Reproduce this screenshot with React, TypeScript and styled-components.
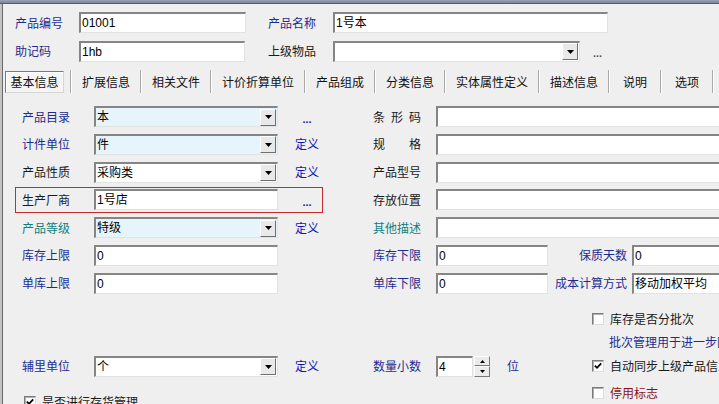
import React from "react";
import styled, { createGlobalStyle, css } from "styled-components";

const GlobalStyle = createGlobalStyle`
  html, body {
    margin: 0;
    padding: 0;
    background: #efefef;
    overflow: hidden;
  }
  body {
    font-family: "Noto Sans CJK SC", "Liberation Sans", sans-serif;
    font-size: 12px;
  }
`;

type Tone = "blue" | "black" | "teal" | "red" | "link" | "gray";

const toneColor: Record<Tone, string> = {
  blue: "#1c2d92",
  black: "#1a1a1a",
  teal: "#0f7f80",
  red: "#8a1414",
  link: "#1414b4",
  gray: "#555555"
};

const TopBar = styled.div`
  height: 4px;
  box-sizing: border-box;
  background: linear-gradient(#9aa2b8, #7b839c);
  border-bottom: 1px solid #5c5c66;
`;

const Frame = styled.div`
  width: 719px;
  height: 400px;
  box-sizing: border-box;
  border-left: 2px solid #c4c4c4;
  box-shadow: inset 1px 0 0 #6a6a6a;
  background: #efefef;
  overflow: hidden;
`;

const Header = styled.div`
  display: flex;
  flex-direction: column;
  gap: 7.5px;
  padding: 8px 0 0 13px;
`;

const HeaderRow = styled.div`
  display: flex;
  align-items: center;
  height: 21px;
`;

const Label = styled.span<{ $tone?: Tone; $w?: number; $ml?: number; $ls?: number; $right?: boolean }>`
  display: inline-block;
  flex: none;
  width: ${({ $w }) => ($w ? `${$w}px` : "auto")};
  margin-left: ${({ $ml }) => $ml ?? 0}px;
  color: ${({ $tone }) => toneColor[$tone ?? "blue"]};
  font-size: 12px;
  line-height: 16px;
  white-space: nowrap;
  letter-spacing: ${({ $ls }) => $ls ?? 0}px;
  text-align: ${({ $right }) => ($right ? "right" : "left")};
  box-sizing: border-box;
  padding-right: ${({ $right }) => ($right ? "5px" : "0")};
`;

const Field = styled.div<{ $w?: number; $tint?: boolean }>`
  box-sizing: border-box;
  flex: none;
  width: ${({ $w }) => ($w ? `${$w}px` : "400px")};
  height: 21px;
  display: flex;
  align-items: center;
  background: ${({ $tint }) => ($tint ? "#e6f4fc" : "#ffffff")};
  border-style: solid;
  border-width: 2px 1px 1px 2px;
  border-color: #858585 #e2e2e2 #e2e2e2 #858585;
  font-family: "Liberation Sans", "Noto Sans CJK SC", sans-serif;
  font-size: 12px;
  color: #000;
  white-space: nowrap;
  overflow: hidden;
`;

const FieldText = styled.span`
  flex: 1;
  padding-left: 1px;
  line-height: 16px;
`;

const DropButton = styled.span`
  flex: none;
  width: 16px;
  height: 17px;
  margin-right: 1px;
  box-sizing: border-box;
  display: flex;
  align-items: center;
  justify-content: center;
  background: #e9e9e9;
  border: 1px solid;
  border-color: #ffffff #6e6e6e #6e6e6e #ffffff;
`;

const Ellipsis = styled.span<{ $tone?: Tone; $ml?: number }>`
  margin-left: ${({ $ml }) => $ml ?? 0}px;
  color: ${({ $tone }) => toneColor[$tone ?? "link"]};
  font-family: "Liberation Sans", sans-serif;
  font-size: 11px;
  font-weight: bold;
  line-height: 16px;
  padding-top: 4px;
`;

const TabStrip = styled.div`
  display: flex;
  height: 24px;
  margin-top: 8.5px;
`;

const ActiveTab = styled.div`
  box-sizing: border-box;
  width: 59px;
  height: 22px;
  margin: 1px 6px 0 3px;
  display: flex;
  align-items: center;
  justify-content: center;
  background: #f5f5f5;
  border: 1px solid;
  border-color: #7a7a7a #d6d6d6 #d6d6d6 #7a7a7a;
  box-shadow: inset 1px 1px 0 #ffffff;
  color: #111;
  line-height: 16px;
`;

const TabSep = styled.span`
  flex: none;
  width: 1px;
  height: 23px;
  background: #a9a9a9;
  border-right: 1px solid #ffffff;
`;

const Tab = styled.div`
  flex: none;
  min-width: 50px;
  box-sizing: border-box;
  padding: 0 10px;
  display: flex;
  align-items: center;
  justify-content: center;
  color: #111;
  line-height: 16px;
  white-space: nowrap;
  height: 23px;
`;

const Columns = styled.div`
  display: flex;
  gap: 50px;
  margin-top: 12px;
  padding-left: 13px;
`;

const Column = styled.div<{ $w?: number }>`
  display: grid;
  grid-auto-rows: 21px;
  row-gap: 6.8px;
  width: ${({ $w }) => ($w ? `${$w}px` : "auto")};
  flex: ${({ $w }) => ($w ? "none" : "1")};
`;

const LeftRow = styled.div<{ $marked?: boolean }>`
  position: relative;
  box-sizing: border-box;
  width: 308px;
  height: 21px;
  padding-left: 7px;
  display: flex;
  align-items: center;
  ${({ $marked }) =>
    $marked &&
    css`
      &::before {
        content: "";
        position: absolute;
        inset: -2px 0 -3px 0;
        border: 1px solid #c62a2a;
        pointer-events: none;
      }
    `}
`;

const LinkCell = styled.span`
  flex: none;
  width: 24px;
  margin-left: 17px;
  display: flex;
  justify-content: center;
  color: ${toneColor.link};
  line-height: 16px;
`;

const RightRow = styled.div`
  display: flex;
  align-items: center;
  height: 21px;
`;

const Lower = styled.div`
  display: grid;
  grid-template-columns: 308px 50px 219px 1fr;
  grid-template-rows: 28px 17px 32px 21px;
  margin-top: 11.7px;
  padding-left: 13px;
`;

const Cell = styled.div<{ $col: number; $row: number; $top?: number }>`
  grid-column: ${({ $col }) => $col};
  grid-row: ${({ $row }) => $row};
  display: flex;
  align-items: ${({ $top }) => ($top !== undefined ? "flex-start" : "center")};
  padding-top: ${({ $top }) => $top ?? 0}px;
  min-width: 0;
  white-space: nowrap;
  overflow: visible;
`;

const CheckRow = styled.div<{ $tone?: Tone; $pl?: number }>`
  display: flex;
  align-items: center;
  gap: 6px;
  padding-left: ${({ $pl }) => $pl ?? 0}px;
  color: ${({ $tone }) => toneColor[$tone ?? "black"]};
  line-height: 16px;
  white-space: nowrap;
`;

const CheckBox = styled.span`
  flex: none;
  width: 12px;
  height: 12px;
  box-sizing: border-box;
  display: flex;
  align-items: center;
  justify-content: center;
  background: #ffffff;
  border: 1px solid;
  border-color: #7a7a7a #dcdcdc #dcdcdc #7a7a7a;
  box-shadow: inset 1px 1px 0 #b0b0b0;
`;

const Note = styled.span`
  padding-left: 17px;
  color: ${toneColor.blue};
  line-height: 16px;
  white-space: nowrap;
`;

const Spin = styled.span`
  display: flex;
  flex-direction: column;
  width: 16px;
  height: 21px;
  margin-left: 1px;
`;

const SpinButton = styled.span`
  flex: 1;
  box-sizing: border-box;
  display: flex;
  align-items: center;
  justify-content: center;
  background: #ebebeb;
  border: 1px solid;
  border-color: #ffffff #7a7a7a #7a7a7a #ffffff;
`;

const Arrow = ({ up }: { up?: boolean }) => (
  <svg width="7" height="4" viewBox="0 0 7 4">
    <path d={up ? "M3.5 0 L7 4 L0 4 Z" : "M0 0 L7 0 L3.5 4 Z"} fill="#000" />
  </svg>
);

const SmallArrow = ({ up }: { up?: boolean }) => (
  <svg width="5" height="3" viewBox="0 0 5 3">
    <path d={up ? "M2.5 0 L5 3 L0 3 Z" : "M0 0 L5 0 L2.5 3 Z"} fill="#000" />
  </svg>
);

const Tick = () => (
  <svg width="8" height="8" viewBox="0 0 8 8">
    <path d="M0.8 3.6 L3 5.8 L7.2 1.4" stroke="#000" strokeWidth="1.8" fill="none" />
  </svg>
);

function Combo(props: { w: number; value: string; tint?: boolean }) {
  return (
    <Field $w={props.w} $tint={props.tint}>
      <FieldText>{props.value}</FieldText>
      <DropButton>
        <Arrow />
      </DropButton>
    </Field>
  );
}

function Check(props: { label: string; checked?: boolean; tone?: Tone; pl?: number }) {
  return (
    <CheckRow $tone={props.tone} $pl={props.pl}>
      <CheckBox>{props.checked ? <Tick /> : null}</CheckBox>
      {props.label}
    </CheckRow>
  );
}

const tabs = ["扩展信息", "相关文件", "计价折算单位", "产品组成", "分类信息", "实体属性定义", "描述信息", "说明", "选项"];

interface leftItem {
  label: string;
  tone: Tone;
  value: string;
  combo: boolean;
  tint?: boolean;
  link?: string;
  marked?: boolean;
}

const leftItems: leftItem[] = [
  { label: "产品目录", tone: "blue", value: "本", combo: true, tint: true, link: "..." },
  { label: "计件单位", tone: "blue", value: "件", combo: true, tint: true, link: "定义" },
  { label: "产品性质", tone: "black", value: "采购类", combo: true, link: "定义" },
  { label: "生产厂商", tone: "black", value: "1号店", combo: false, link: "...", marked: true },
  { label: "产品等级", tone: "teal", value: "特级", combo: true, tint: true, link: "定义" },
  { label: "库存上限", tone: "blue", value: "0", combo: false },
  { label: "单库上限", tone: "blue", value: "0", combo: false }
];

const rightItems: { label: string; tone: Tone; ls?: number }[] = [
  { label: "条形码", tone: "black", ls: 6 },
  { label: "规格", tone: "black", ls: 24 },
  { label: "产品型号", tone: "black" },
  { label: "存放位置", tone: "black" },
  { label: "其他描述", tone: "teal" }
];

export default function App() {
  return (
    <>
      <GlobalStyle />
      <TopBar />
      <Frame>
        <Header>
          <HeaderRow>
            <Label $w={64}>产品编号</Label>
            <Field $w={167}>
              <FieldText>01001</FieldText>
            </Field>
            <Label $w={65} $ml={22}>产品名称</Label>
            <Field $w={275}>
              <FieldText>1号本</FieldText>
            </Field>
          </HeaderRow>
          <HeaderRow>
            <Label $w={64}>助记码</Label>
            <Field $w={166}>
              <FieldText>1hb</FieldText>
            </Field>
            <Label $w={65} $ml={23} $tone="black">上级物品</Label>
            <Combo w={247} value="" />
            <Ellipsis $tone="gray" $ml={13}>...</Ellipsis>
          </HeaderRow>
        </Header>

        <TabStrip>
          <ActiveTab>基本信息</ActiveTab>
          {tabs.map((t) => (
            <React.Fragment key={t}>
              <TabSep />
              <Tab>{t}</Tab>
            </React.Fragment>
          ))}
          <TabSep />
        </TabStrip>

        <Columns>
          <Column $w={308}>
            {leftItems.map((item) => (
              <LeftRow key={item.label} $marked={item.marked}>
                <Label $w={72} $tone={item.tone}>{item.label}</Label>
                {item.combo ? (
                  <Combo w={184} value={item.value} tint={item.tint} />
                ) : (
                  <Field $w={184}>
                    <FieldText>{item.value}</FieldText>
                  </Field>
                )}
                {item.link === "..." ? (
                  <LinkCell>
                    <Ellipsis>...</Ellipsis>
                  </LinkCell>
                ) : item.link ? (
                  <LinkCell>{item.link}</LinkCell>
                ) : null}
              </LeftRow>
            ))}
          </Column>
          <Column>
            {rightItems.map((item) => (
              <RightRow key={item.label}>
                <Label $w={63} $tone={item.tone} $ls={item.ls}>{item.label}</Label>
                <Field $w={320} />
              </RightRow>
            ))}
            <RightRow>
              <Label $w={63}>库存下限</Label>
              <Field $w={112}>
                <FieldText>0</FieldText>
              </Field>
              <Label $w={84} $right>保质天数</Label>
              <Field $w={120}>
                <FieldText>0</FieldText>
              </Field>
            </RightRow>
            <RightRow>
              <Label $w={63}>单库下限</Label>
              <Field $w={112}>
                <FieldText>0</FieldText>
              </Field>
              <Label $w={84} $right>成本计算方式</Label>
              <Field $w={120}>
                <FieldText>移动加权平均</FieldText>
              </Field>
            </RightRow>
          </Column>
        </Columns>

        <Lower>
          <Cell $col={1} $row={3}>
            <LeftRow>
              <Label $w={72}>辅里单位</Label>
              <Combo w={184} value="个" />
              <LinkCell>定义</LinkCell>
            </LeftRow>
          </Cell>
          <Cell $col={1} $row={4} $top={12}>
            <Check label="是否进行存货管理" checked pl={9} />
          </Cell>
          <Cell $col={3} $row={3}>
            <Label $w={63}>数量小数</Label>
            <Field $w={37}>
              <FieldText>4</FieldText>
            </Field>
            <Spin>
              <SpinButton>
                <SmallArrow up />
              </SpinButton>
              <SpinButton>
                <SmallArrow />
              </SpinButton>
            </Spin>
            <Label $ml={17}>位</Label>
          </Cell>
          <Cell $col={4} $row={1}>
            <Check label="库存是否分批次" />
          </Cell>
          <Cell $col={4} $row={2}>
            <Note>批次管理用于进一步区分库存</Note>
          </Cell>
          <Cell $col={4} $row={3}>
            <Check label="自动同步上级产品信息" checked />
          </Cell>
          <Cell $col={4} $row={4}>
            <Check label="停用标志" tone="red" />
          </Cell>
        </Lower>
      </Frame>
    </>
  );
}
